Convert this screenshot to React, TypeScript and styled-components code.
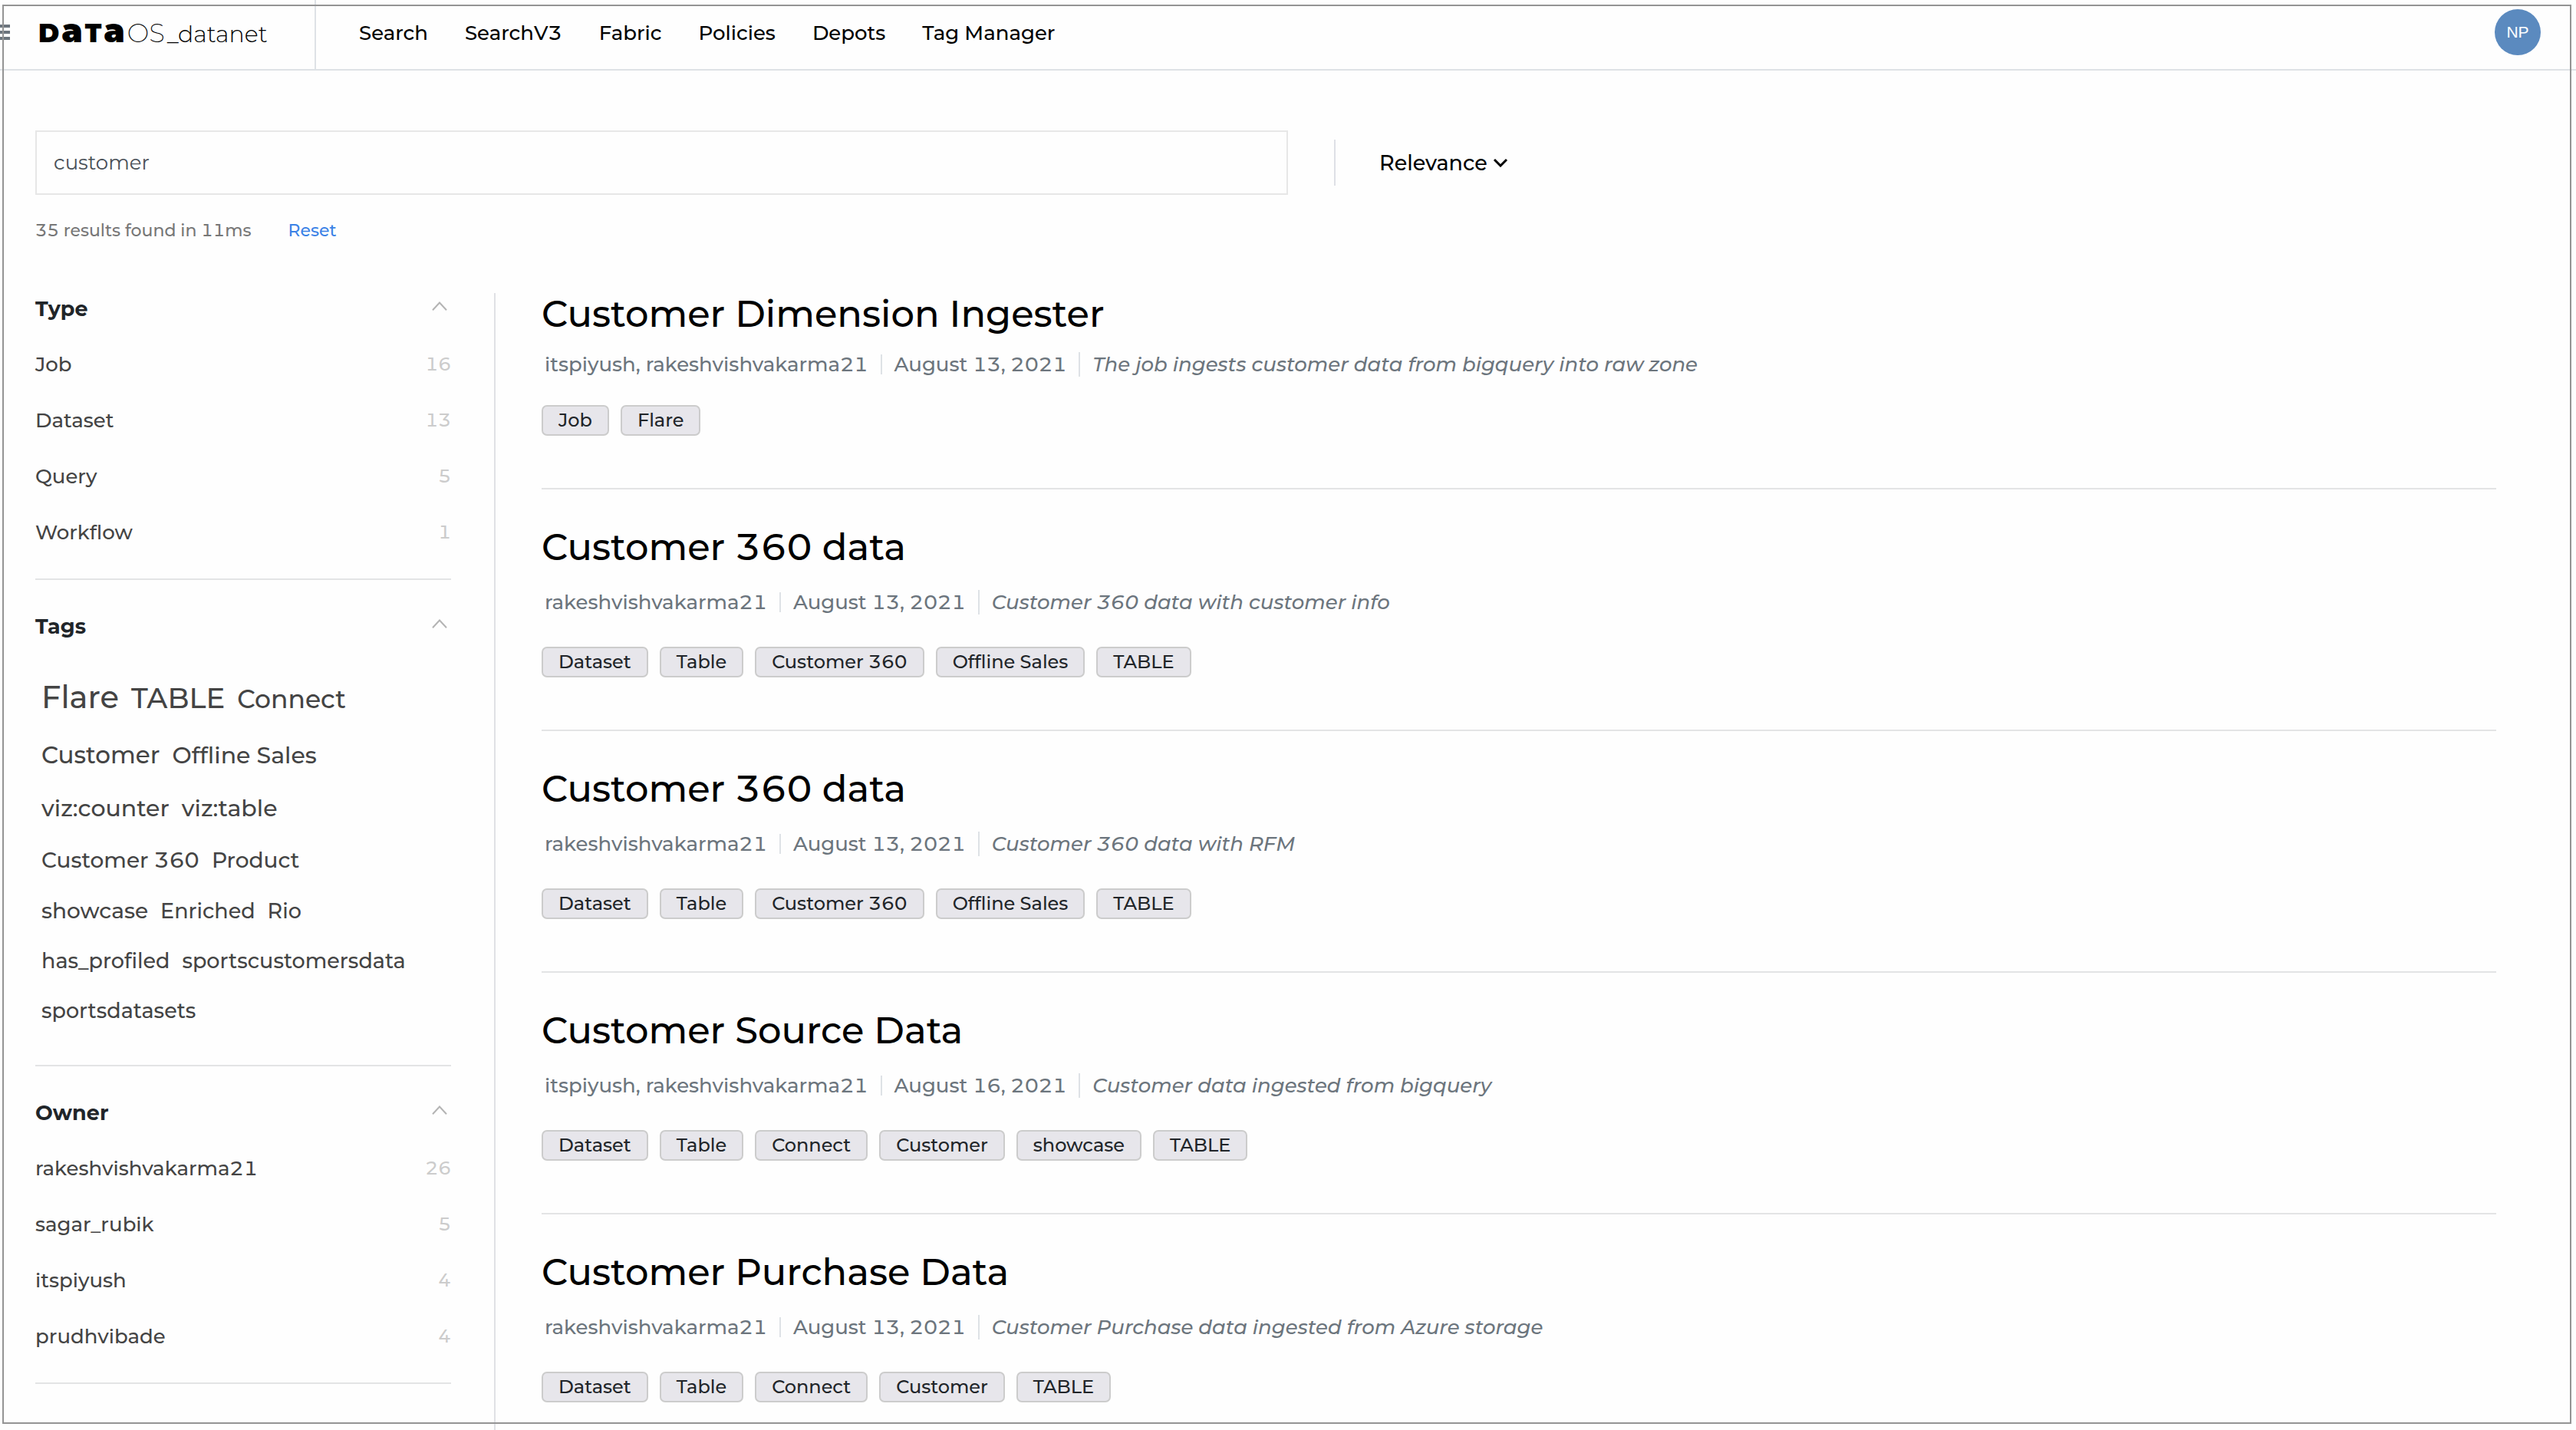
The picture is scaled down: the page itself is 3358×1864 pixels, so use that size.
import React from 'react';
import styled, { createGlobalStyle } from 'styled-components';

const GlobalStyle = createGlobalStyle`
  *, *::before, *::after { box-sizing: border-box; }
  body {
    margin: 0;
    background: #fefefe;
    color: #212529;
    font-family: Montserrat, "DejaVu Sans", sans-serif;
    font-size: 26px;
    font-weight: 500;
    font-variant-numeric: tabular-nums;
  }
  a { color: inherit; text-decoration: none; }
  button, input, select {
    font: inherit;
    font-variant-numeric: inherit;
    color: inherit;
    margin: 0;
    padding: 0;
    border: 0;
    background: none;
    border-radius: 0;
  }
  button, select { cursor: pointer; }
  h2, h3, p, ul { margin: 0; padding: 0; }
  ul { list-style: none; }
`;

const Page = styled.div`
  min-height: 100vh;
  display: flex;
  flex-direction: column;
`;

const WindowFrame = styled.div`
  position: fixed;
  inset: 6px 6px 8px 3px;
  border: 2px solid #949494;
  pointer-events: none;
`;

const Header = styled.header`
  display: flex;
  height: 92px;
  border-bottom: 2px solid #dee2e6;
`;

const Brand = styled.div`
  display: flex;
  align-items: center;
  width: 412px;
  padding-bottom: 6px;
  gap: 37px;
  border-right: 2px solid #dee2e6;
`;

const MenuButton = styled.button`
  display: flex;
  color: #6c757d;
`;

const Logo = styled.a`
  display: flex;
  align-items: baseline;
  gap: 3px;
  font-size: 30px;
  line-height: 48px;
  font-weight: 300;
  color: #000;
  white-space: nowrap;
`;

const LogoBold = styled.span`
  display: inline-flex;
  align-items: baseline;
  gap: 3px;
  font-weight: 900;
  font-size: 33px;
`;

const LogoTall = styled.span`
  font-size: 43px;
`;

const LogoThin = styled.span`
  font-weight: 200;
  font-size: 34px;
`;

const Nav = styled.nav`
  flex: 1;
  display: flex;
  align-items: center;
  gap: 48px;
  padding: 0 0 4px 56px;
  color: #000;
`;

const Avatar = styled.button`
  align-self: flex-start;
  width: 60px;
  height: 60px;
  margin: 12px 46px 0 0;
  border-radius: 50%;
  background: #5b8abf;
  color: #fff;
  font-family: "Liberation Sans", Arial, sans-serif;
  font-size: 21px;
  font-weight: 400;
`;

const Main = styled.main`
  flex: 1;
  display: flex;
  flex-direction: column;
  padding: 78px 46px 0;
`;

const SearchRow = styled.form`
  display: flex;
  align-items: center;
`;

const SearchInput = styled.input`
  width: 50%;
  height: 84px;
  padding: 0 22px;
  border: 2px solid #e7e7e7;
  color: #495057;
  font-weight: 400;
`;

const SortField = styled.label`
  display: flex;
  align-items: center;
  gap: 7px;
  height: 60px;
  margin-left: 60px;
  padding-left: 57px;
  border-left: 2px solid #dee0e6;
  color: #000;
`;

const SortSelect = styled.select`
  appearance: none;
  font-size: 27px;
  outline: none;
`;

const Summary = styled.div`
  display: flex;
  gap: 48px;
  margin: 31px 0 65px;
  font-size: 22px;
  line-height: 32px;
  color: #777;
`;

const ResetButton = styled.button`
  color: #3b82e6;
`;

const Columns = styled.div`
  flex: 1;
  display: flex;
`;

const Sidebar = styled.aside`
  flex: none;
  width: 600px;
  padding-right: 56px;
  border-right: 2px solid #e0e1e5;
`;

const Facet = styled.section`
  padding-bottom: 24px;
  border-bottom: 2px solid #e3e4e5;
  & + & { padding-top: 40px; }
`;

const FacetHead = styled.div`
  display: flex;
  justify-content: space-between;
  align-items: flex-start;
  margin-bottom: 14px;
`;

const FacetTitle = styled.h3`
  font-size: 27px;
  line-height: 42px;
  font-weight: 700;
`;

const CollapseButton = styled.button`
  display: flex;
  align-items: center;
  height: 34px;
  padding-right: 5px;
  color: #b4b4b4;
`;

const FacetRow = styled.button`
  display: flex;
  justify-content: space-between;
  align-items: center;
  width: 100%;
  height: 73px;
  color: #444;
`;

const FacetCount = styled.span`
  font-size: 24px;
  color: #ccc;
`;

const Cloud = styled.div`
  display: flex;
  flex-direction: column;
  gap: 32px;
  padding: 32px 8px 30px;
`;

const CloudLine = styled.div`
  display: flex;
  align-items: baseline;
  gap: 16px;
`;

const CloudTag = styled.button<{ $size: number }>`
  font-size: ${(p) => p.$size}px;
  color: #444;
  white-space: nowrap;
`;

const Results = styled.div`
  flex: 1;
  padding: 0 58px 0 60px;
`;

const Title = styled.h2`
  font-size: 48px;
  line-height: 54px;
  font-weight: 500;
  color: #000;
`;

const Meta = styled.div`
  display: flex;
  align-items: center;
  gap: 16px;
  margin: 29px 0 42px;
  padding-left: 4px;
  line-height: 32px;
  color: #6c757d;
`;

const MetaRule = styled.span<{ $tall?: boolean }>`
  width: 2px;
  height: ${(p) => (p.$tall ? 32 : 26)}px;
  background: #dee2e6;
`;

const Chips = styled.ul`
  display: flex;
  gap: 15px;
`;

const Chip = styled.li`
  padding: 0 20px;
  border: 2px solid #ccc;
  border-radius: 7px;
  background: #e7e6eb;
  font-size: 24px;
  line-height: 36px;
`;

const Card = styled.article`
  padding: 48px 0 68px;
  border-bottom: 2px solid #e3e4e5;
  &:first-child { padding-top: 0; }
  &:first-child ${Meta} { margin: 23px 0 37px; }
  &:last-child { padding-bottom: 0; border-bottom: 0; }
`;

const MenuIcon = () => (
  <svg width="13" height="20" viewBox="0 0 13 20" fill="currentColor" aria-hidden="true">
    <path d="M0 0h13v4H0zM0 8h13v4H0zM0 16h13v4H0z" />
  </svg>
);

const ChevronUp = () => (
  <svg width="20" height="12" viewBox="0 0 20 12" fill="none" stroke="currentColor" strokeWidth="2" aria-hidden="true">
    <path d="M1 11.3 10 1.5l9 9.8" />
  </svg>
);

const ChevronDown = () => (
  <svg width="20" height="12" viewBox="0 0 20 12" fill="none" stroke="currentColor" strokeWidth="3" aria-hidden="true">
    <path d="M2 2l8 8 8-8" />
  </svg>
);

type FacetItem = { name: string; count: number };

const types: FacetItem[] = [
  { name: 'Job', count: 16 },
  { name: 'Dataset', count: 13 },
  { name: 'Query', count: 5 },
  { name: 'Workflow', count: 1 },
];

const owners: FacetItem[] = [
  { name: 'rakeshvishvakarma21', count: 26 },
  { name: 'sagar_rubik', count: 5 },
  { name: 'itspiyush', count: 4 },
  { name: 'prudhvibade', count: 4 },
];

const cloud: [string, number][][] = [
  [['Flare', 40], ['TABLE', 37], ['Connect', 33]],
  [['Customer', 31], ['Offline Sales', 30]],
  [['viz:counter', 30], ['viz:table', 30]],
  [['Customer 360', 28], ['Product', 28]],
  [['showcase', 28], ['Enriched', 27], ['Rio', 27]],
  [['has_profiled', 27], ['sportscustomersdata', 27]],
  [['sportsdatasets', 27]],
];

const results = [
  {
    title: 'Customer Dimension Ingester',
    owner: 'itspiyush, rakeshvishvakarma21',
    date: 'August 13, 2021',
    about: 'The job ingests customer data from bigquery into raw zone',
    chips: ['Job', 'Flare'],
  },
  {
    title: 'Customer 360 data',
    owner: 'rakeshvishvakarma21',
    date: 'August 13, 2021',
    about: 'Customer 360 data with customer info',
    chips: ['Dataset', 'Table', 'Customer 360', 'Offline Sales', 'TABLE'],
  },
  {
    title: 'Customer 360 data',
    owner: 'rakeshvishvakarma21',
    date: 'August 13, 2021',
    about: 'Customer 360 data with RFM',
    chips: ['Dataset', 'Table', 'Customer 360', 'Offline Sales', 'TABLE'],
  },
  {
    title: 'Customer Source Data',
    owner: 'itspiyush, rakeshvishvakarma21',
    date: 'August 16, 2021',
    about: 'Customer data ingested from bigquery',
    chips: ['Dataset', 'Table', 'Connect', 'Customer', 'showcase', 'TABLE'],
  },
  {
    title: 'Customer Purchase Data',
    owner: 'rakeshvishvakarma21',
    date: 'August 13, 2021',
    about: 'Customer Purchase data ingested from Azure storage',
    chips: ['Dataset', 'Table', 'Connect', 'Customer', 'TABLE'],
  },
];

const navItems = ['Search', 'SearchV3', 'Fabric', 'Policies', 'Depots', 'Tag Manager'];

function FacetSection({ title, children }: { title: string; children: React.ReactNode }) {
  return (
    <Facet>
      <FacetHead>
        <FacetTitle>{title}</FacetTitle>
        <CollapseButton type="button" aria-label={`Collapse ${title}`}>
          <ChevronUp />
        </CollapseButton>
      </FacetHead>
      {children}
    </Facet>
  );
}

function FacetList({ items }: { items: FacetItem[] }) {
  return (
    <ul>
      {items.map((item) => (
        <li key={item.name}>
          <FacetRow type="button">
            {item.name}
            <FacetCount>{item.count}</FacetCount>
          </FacetRow>
        </li>
      ))}
    </ul>
  );
}

export default function App() {
  return (
    <Page>
      <GlobalStyle />
      <Header>
        <Brand>
          <MenuButton type="button" aria-label="Menu">
            <MenuIcon />
          </MenuButton>
          <Logo href="#">
            <LogoBold>
              D<LogoTall>a</LogoTall>T<LogoTall>a</LogoTall>
            </LogoBold>
            <LogoThin>OS</LogoThin>
            <span>_datanet</span>
          </Logo>
        </Brand>
        <Nav>
          {navItems.map((item) => (
            <a key={item} href="#">{item}</a>
          ))}
        </Nav>
        <Avatar type="button">NP</Avatar>
      </Header>
      <Main>
        <SearchRow>
          <SearchInput type="text" aria-label="Search" defaultValue="customer" />
          <SortField>
            <SortSelect aria-label="Sort by">
              <option>Relevance</option>
            </SortSelect>
            <ChevronDown />
          </SortField>
        </SearchRow>
        <Summary>
          <p>35 results found in 11ms</p>
          <ResetButton type="button">Reset</ResetButton>
        </Summary>
        <Columns>
          <Sidebar>
            <FacetSection title="Type">
              <FacetList items={types} />
            </FacetSection>
            <FacetSection title="Tags">
              <Cloud>
                {cloud.map((line) => (
                  <CloudLine key={line[0][0]}>
                    {line.map(([name, size]) => (
                      <CloudTag key={name} type="button" $size={size}>{name}</CloudTag>
                    ))}
                  </CloudLine>
                ))}
              </Cloud>
            </FacetSection>
            <FacetSection title="Owner">
              <FacetList items={owners} />
            </FacetSection>
          </Sidebar>
          <Results>
            {results.map((r, i) => (
              <Card key={i}>
                <Title><a href="#">{r.title}</a></Title>
                <Meta>
                  <span>{r.owner}</span>
                  <MetaRule />
                  <span>{r.date}</span>
                  <MetaRule $tall />
                  <em>{r.about}</em>
                </Meta>
                <Chips>
                  {r.chips.map((c) => <Chip key={c}>{c}</Chip>)}
                </Chips>
              </Card>
            ))}
          </Results>
        </Columns>
      </Main>
      <WindowFrame />
    </Page>
  );
}
